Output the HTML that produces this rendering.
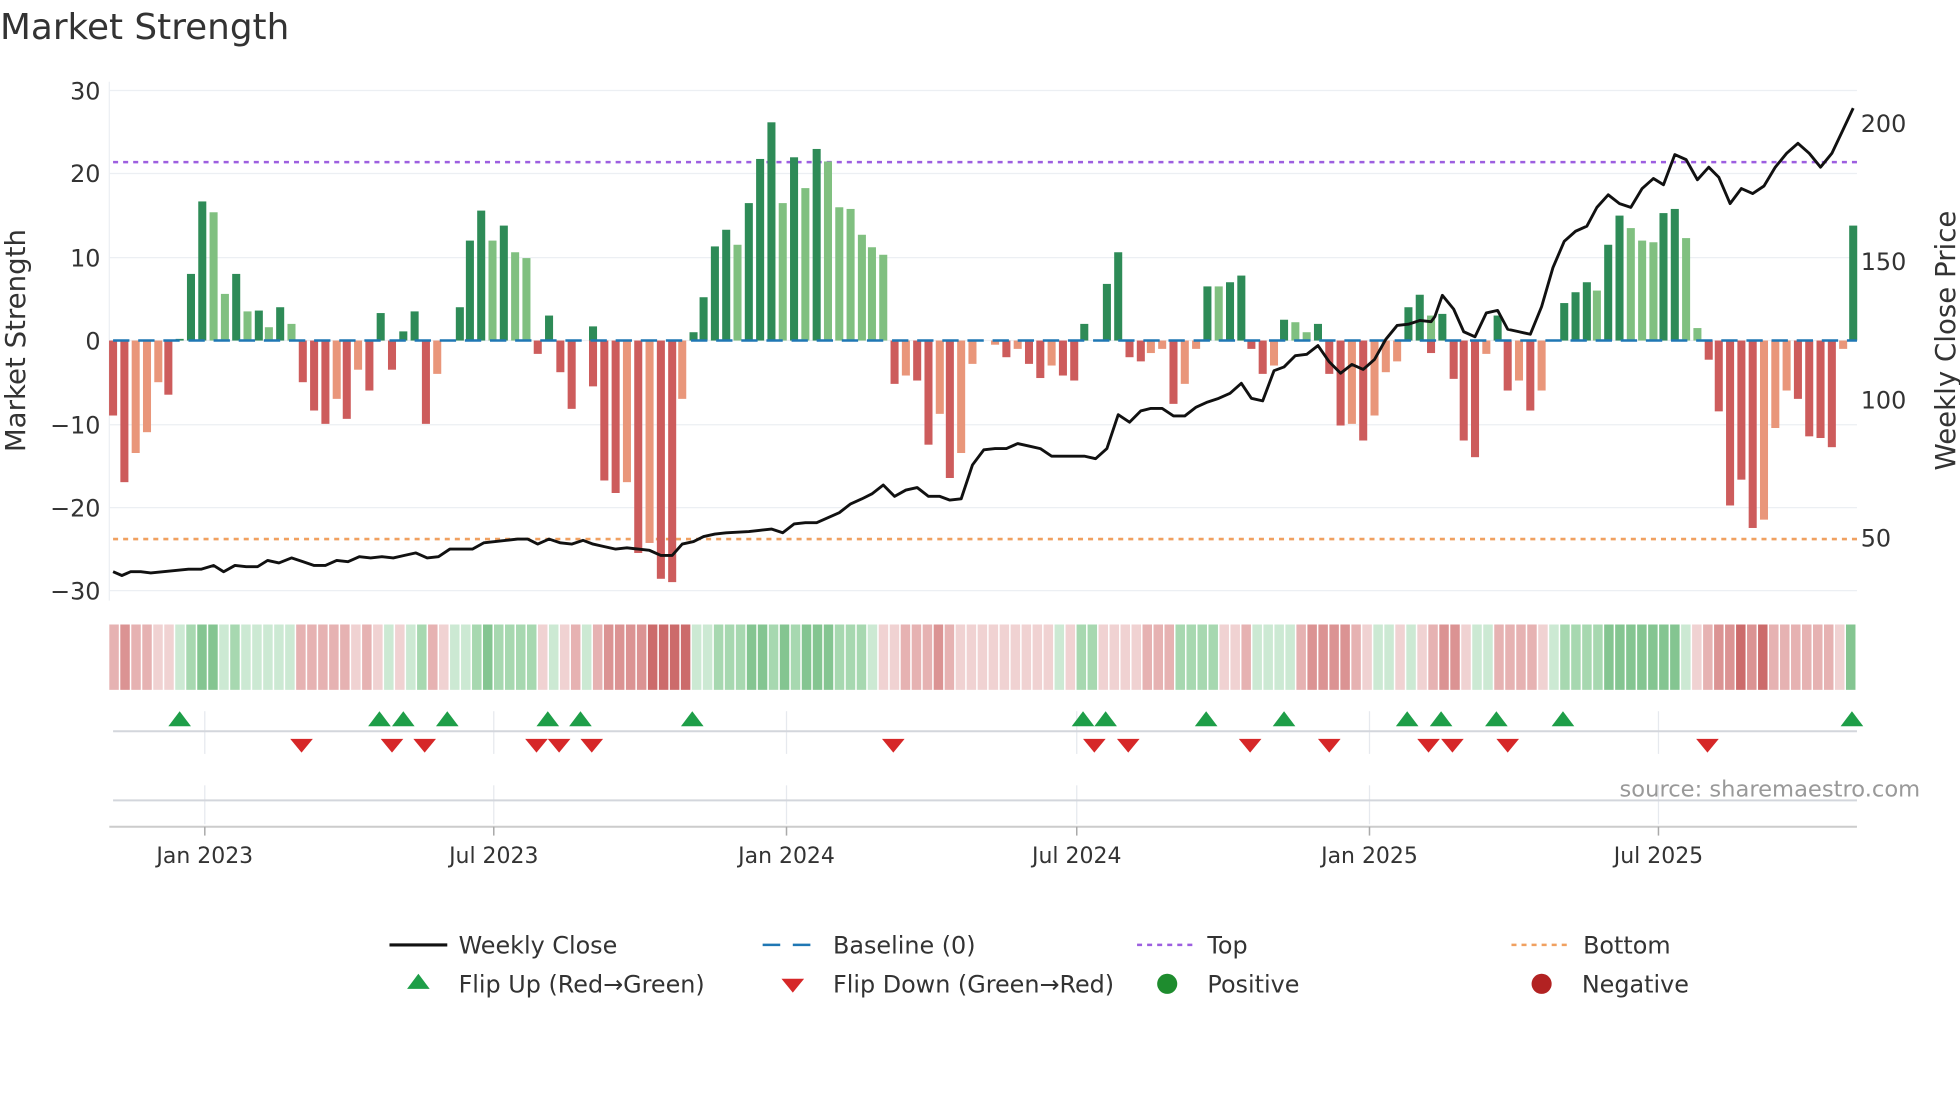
<!DOCTYPE html>
<html><head><meta charset="utf-8"><style>
html,body{margin:0;padding:0;background:#fff;width:1960px;height:1102px;overflow:hidden}
svg{display:block}
text{font-family:"DejaVu Sans","Liberation Sans",sans-serif;fill:#333}
</style></head><body>
<svg id="s" width="1960" height="1102" viewBox="0 0 1560 877" xmlns="http://www.w3.org/2000/svg">
<text x="0" y="31" font-size="28.5">Market Strength</text>
<g stroke="#eceff3" stroke-width="1">
<line x1="87" y1="72" x2="1478" y2="72"/><line x1="87" y1="138" x2="1478" y2="138"/>
<line x1="87" y1="205" x2="1478" y2="205"/><line x1="87" y1="271" x2="1478" y2="271"/>
<line x1="87" y1="338" x2="1478" y2="338"/><line x1="87" y1="404" x2="1478" y2="404"/>
<line x1="87" y1="470" x2="1478" y2="470"/><line x1="87" y1="65" x2="87" y2="478"/>
</g>
<g font-size="19" text-anchor="end">
<text x="80" y="79">30</text><text x="80" y="145">20</text><text x="80" y="212">10</text>
<text x="80" y="278">0</text><text x="80" y="345">−10</text><text x="80" y="411">−20</text><text x="80" y="477">−30</text>
</g>
<g font-size="19">
<text x="1481" y="105">200</text><text x="1481" y="215">150</text><text x="1481" y="325">100</text><text x="1481" y="435">50</text>
</g>
<text font-size="22" transform="translate(20,271) rotate(-90)" text-anchor="middle">Market Strength</text>
<text font-size="22" transform="translate(1556,271) rotate(-90)" text-anchor="middle">Weekly Close Price</text>
<line x1="90" y1="129" x2="1478" y2="129" stroke="#9d5fe0" stroke-width="2" stroke-dasharray="4 4"/>
<line x1="90" y1="429" x2="1478" y2="429" stroke="#f0a060" stroke-width="2" stroke-dasharray="4 4"/>
<g id="bars"></g>
<line x1="90" y1="271" x2="1478" y2="271" stroke="#1f77b4" stroke-width="2" stroke-dasharray="13 7"/>
<polyline id="price" fill="none" stroke="#111" stroke-width="2.3" stroke-linejoin="round"/>
<g id="strip"></g>
<g stroke="#e6e9ee" stroke-width="1">
<line x1="163" y1="566" x2="163" y2="600"/><line x1="393" y1="566" x2="393" y2="600"/><line x1="626" y1="566" x2="626" y2="600"/>
<line x1="857" y1="566" x2="857" y2="600"/><line x1="1090" y1="566" x2="1090" y2="600"/><line x1="1320" y1="566" x2="1320" y2="600"/>
<line x1="163" y1="625" x2="163" y2="656"/><line x1="393" y1="625" x2="393" y2="656"/><line x1="626" y1="625" x2="626" y2="656"/>
<line x1="857" y1="625" x2="857" y2="656"/><line x1="1090" y1="625" x2="1090" y2="656"/><line x1="1320" y1="625" x2="1320" y2="656"/>
</g>
<line x1="90" y1="582" x2="1478" y2="582" stroke="#d3d6dc" stroke-width="1.6"/>
<line x1="90" y1="637" x2="1478" y2="637" stroke="#d3d6dc" stroke-width="1.6"/>
<line x1="87" y1="658" x2="1478" y2="658" stroke="#ccc" stroke-width="1.6"/>
<g id="tri"></g>
<g stroke="#aaa" stroke-width="1.2">
<line x1="163" y1="658" x2="163" y2="665"/><line x1="393" y1="658" x2="393" y2="665"/><line x1="626" y1="658" x2="626" y2="665"/>
<line x1="857" y1="658" x2="857" y2="665"/><line x1="1090" y1="658" x2="1090" y2="665"/><line x1="1320" y1="658" x2="1320" y2="665"/>
</g>
<g font-size="17.5" text-anchor="middle">
<text x="163" y="687">Jan 2023</text><text x="393" y="687">Jul 2023</text><text x="626" y="687">Jan 2024</text>
<text x="857" y="687">Jul 2024</text><text x="1090" y="687">Jan 2025</text><text x="1320" y="687">Jul 2025</text>
</g>
<text x="1289" y="634" font-size="18" style="fill:#999">source: sharemaestro.com</text>
<g font-size="19">
<line x1="310" y1="752" x2="356" y2="752" stroke="#111" stroke-width="2.5"/>
<text x="365" y="759">Weekly Close</text>
<line x1="607" y1="752" x2="652" y2="752" stroke="#1f77b4" stroke-width="2" stroke-dasharray="14 10"/>
<text x="663" y="759">Baseline (0)</text>
<line x1="905" y1="752" x2="950" y2="752" stroke="#9d5fe0" stroke-width="2" stroke-dasharray="4 4"/>
<text x="961" y="759">Top</text>
<line x1="1203" y1="752" x2="1248" y2="752" stroke="#f0a060" stroke-width="2" stroke-dasharray="4 4"/>
<text x="1260" y="759">Bottom</text>
<polygon points="333,775 342,787 324,787" fill="#1e9e48"/>
<text x="365" y="790">Flip Up (Red→Green)</text>
<polygon points="622,779 640,779 631,790" fill="#d62728"/>
<text x="663" y="790">Flip Down (Green→Red)</text>
<circle cx="929" cy="783" r="8" fill="#1e8c2e"/>
<text x="961" y="790">Positive</text>
<circle cx="1227" cy="783" r="8" fill="#b22222"/>
<text x="1259" y="790">Negative</text>
</g>
</svg>
<script>
var NS="http://www.w3.org/2000/svg";
function el(p,t,a){var e=document.createElementNS(NS,t);for(var k in a)e.setAttribute(k,a[k]);p.appendChild(e);return e;}
var C={D:"#2e8b57",L:"#80c080",R:"#cd5c5c",S:"#e9967a"};
var B=[[90,-9,"R"],[99,-17,"R"],[108,-13.5,"S"],[117,-11,"S"],[126,-5,"S"],[134,-6.5,"R"],[143,0.2,"D"],[152,8,"D"],[161,16.7,"D"],[170,15.4,"L"],[179,5.6,"L"],[188,8,"D"],[197,3.5,"L"],[206,3.6,"D"],[214,1.6,"L"],[223,4,"D"],[232,2,"L"],[241,-5,"R"],[250,-8.4,"R"],[259,-10,"R"],[268,-7,"S"],[276,-9.4,"R"],[285,-3.5,"S"],[294,-6,"R"],[303,3.3,"D"],[312,-3.5,"R"],[321,1.1,"D"],[330,3.5,"D"],[339,-10,"R"],[348,-4,"S"],[366,4,"D"],[374,12,"D"],[383,15.6,"D"],[392,12,"L"],[401,13.8,"D"],[410,10.6,"L"],[419,9.9,"L"],[437,3,"D"],[428,-1.6,"R"],[446,-3.8,"R"],[455,-8.2,"R"],[472,1.7,"D"],[472,-5.5,"R"],[481,-16.8,"R"],[490,-18.3,"R"],[499,-17,"S"],[508,-25.5,"R"],[517,-24.3,"S"],[526,-28.6,"R"],[535,-29,"R"],[543,-7,"S"],[552,1,"D"],[560,5.2,"D"],[569,11.3,"D"],[578,13.3,"D"],[587,11.5,"L"],[596,16.5,"D"],[605,21.8,"D"],[614,26.2,"D"],[623,16.5,"L"],[632,22,"D"],[641,18.3,"L"],[650,23,"D"],[659,21.5,"L"],[668,16,"L"],[677,15.8,"L"],[686,12.7,"L"],[694,11.2,"L"],[703,10.3,"L"],[712,-5.2,"R"],[721,-4.2,"S"],[730,-4.8,"R"],[739,-12.5,"R"],[748,-8.8,"S"],[756,-16.5,"R"],[765,-13.5,"S"],[774,-2.8,"S"],[792,-0.5,"S"],[801,-2,"R"],[810,-1,"S"],[819,-2.8,"R"],[828,-4.5,"R"],[837,-3,"S"],[846,-4.2,"R"],[855,-4.8,"R"],[863,2,"D"],[881,6.8,"D"],[890,10.6,"D"],[899,-2,"R"],[908,-2.5,"R"],[916,-1.5,"S"],[925,-1,"S"],[934,-7.6,"R"],[943,-5.2,"S"],[952,-1,"S"],[961,6.5,"D"],[970,6.5,"L"],[979,7,"D"],[988,7.8,"D"],[996,-1,"R"],[1005,-4,"R"],[1014,-3,"S"],[1022,2.5,"D"],[1031,2.2,"L"],[1040,1,"L"],[1049,2,"D"],[1058,-4,"R"],[1067,-10.2,"R"],[1076,-10,"S"],[1085,-12,"R"],[1094,-9,"S"],[1103,-3.8,"S"],[1112,-2.5,"S"],[1121,4,"D"],[1130,5.5,"D"],[1139,-1.5,"R"],[1148,3.2,"D"],[1139,3,"L"],[1157,-4.6,"R"],[1165,-12,"R"],[1174,-14,"R"],[1183,-1.6,"S"],[1192,3,"D"],[1200,-6,"R"],[1209,-4.8,"S"],[1218,-8.4,"R"],[1227,-6,"S"],[1245,4.5,"D"],[1254,5.8,"D"],[1263,7,"D"],[1271,6,"L"],[1280,11.5,"D"],[1289,15,"D"],[1298,13.5,"L"],[1307,12,"L"],[1316,11.8,"L"],[1324,15.3,"D"],[1333,15.8,"D"],[1342,12.3,"L"],[1351,1.5,"L"],[1360,-2.3,"R"],[1368,-8.5,"R"],[1377,-19.8,"R"],[1386,-16.7,"R"],[1395,-22.5,"R"],[1404,-21.5,"S"],[1413,-10.5,"S"],[1422,-6,"S"],[1431,-7,"R"],[1440,-11.5,"R"],[1449,-11.7,"R"],[1458,-12.8,"R"],[1467,-1,"S"],[1475,13.8,"D"]];
var g=document.getElementById("bars");
B.forEach(function(b){var h=Math.abs(b[1])*6.63;var y=b[1]>0?271-h:271;el(g,"rect",{x:b[0]-3.2,y:y,width:6.4,height:Math.max(h,0.8),fill:C[b[2]]});});
var P=[[90,455],[97,458],[104,455],[112,455],[120,456],[130,455],[140,454],[150,453],[160,453],[170,450],[178,455],[187,450],[196,451],[205,451],[213,446],[222,448],[232,444],[241,447],[250,450],[259,450],[268,446],[277,447],[286,443],[295,444],[304,443],[313,444],[322,442],[331,440],[340,444],[349,443],[358,437],[367,437],[376,437],[385,432],[394,431],[403,430],[412,429],[420,429],[428,433],[437,429],[446,432],[455,433],[464,430],[472,433],[481,435],[490,437],[499,436],[508,437],[517,438],[526,442],[535,442],[543,433],[552,431],[560,427],[569,425],[578,424],[596,423],[605,422],[614,421],[623,424],[632,417],[641,416],[650,416],[659,412],[668,408],[677,401],[686,397],[694,393],[703,386],[712,395],[721,390],[730,388],[739,395],[748,395],[756,398],[765,397],[774,370],[783,358],[792,357],[801,357],[810,353],[819,355],[828,357],[837,363],[846,363],[855,363],[863,363],[872,365],[881,357],[890,330],[899,336],[908,327],[916,325],[925,325],[934,331],[943,331],[952,324],[961,320],[970,317],[979,313],[988,305],[996,317],[1005,319],[1014,295],[1022,292],[1031,283],[1040,282],[1049,275],[1058,288],[1067,297],[1076,290],[1085,294],[1094,286],[1103,270],[1112,259],[1121,258],[1130,255],[1139,256],[1142,252],[1148,235],[1157,246],[1165,264],[1174,268],[1183,249],[1192,247],[1200,262],[1209,264],[1218,266],[1227,244],[1236,213],[1245,192],[1254,184],[1263,180],[1271,165],[1280,155],[1289,162],[1298,165],[1307,150],[1316,142],[1324,147],[1333,123],[1342,127],[1351,143],[1360,133],[1368,141],[1377,162],[1386,150],[1395,154],[1404,148],[1413,133],[1422,122],[1431,114],[1440,122],[1449,133],[1458,122],[1467,103],[1475,86]];
document.getElementById("price").setAttribute("points",P.map(function(p){return p.join(",")}).join(" "));
var S="bcbbaaABCCABAAAAAbbbbbabaAaABbaAABCBBBBaAabAbccccddddAABBBCCBCBCCCBBBAaabbbcbaaaaaaaaaAaBBaaaabbbBBBBaabAAAAbccccbaAAaAabccaAAbbbbaABBBBCCCCCCCAabccdcdbbbbbbaC";
var SC={a:"#f0d2d2",b:"#e6b2b2",c:"#db9393",d:"#cc6b6b",A:"#cce9d3",B:"#a7d8b0",C:"#84c591",D:"#5cb06f"};
var st=document.getElementById("strip");var n=S.length,pw=(1478-87)/n;
for(var i=0;i<n;i++){el(st,"rect",{x:87+i*pw,y:497,width:pw-1.2,height:52,fill:SC[S[i]]});}
var t=document.getElementById("tri");
[143,302,321,356,436,462,551,862,880,960,1022,1120,1147,1191,1244,1474].forEach(function(x){el(t,"polygon",{points:(x)+",566 "+(x+9)+",578 "+(x-9)+",578",fill:"#1e9e48"});});
[240,312,338,427,445,471,711,871,898,995,1058,1137,1156,1200,1359].forEach(function(x){el(t,"polygon",{points:(x-9)+",588 "+(x+9)+",588 "+x+",599",fill:"#d62728"});});
</script>
</body></html>
